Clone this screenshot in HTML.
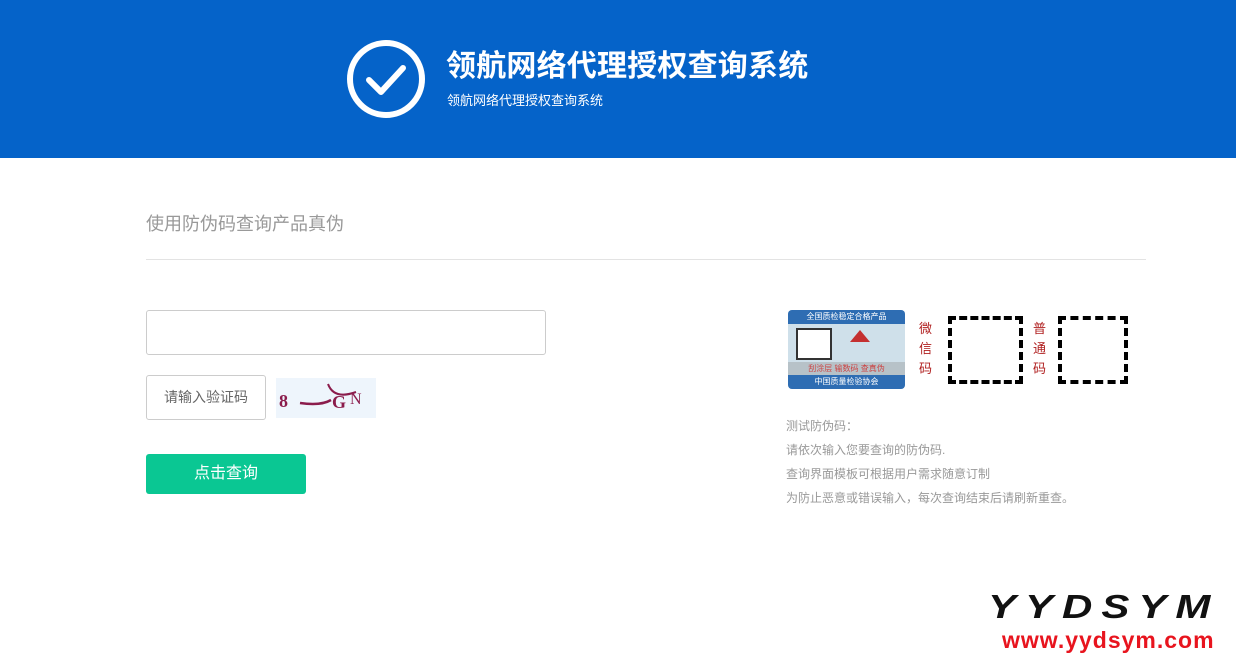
<!DOCTYPE html>
<html><head><meta charset="utf-8"><style>
*{margin:0;padding:0;box-sizing:border-box}
body{width:1236px;height:663px;position:relative;background:#fff;font-family:"Liberation Sans","Noto Sans CJK SC",sans-serif;overflow:hidden}
.a{position:absolute}
.hdr{left:0;top:0;width:1236px;height:158px;background:#0563c9}
.qr{border:4px dashed #000;background:#fff}
.g{font-size:12px;color:#999;left:786px}
</style></head><body>
<div class="a hdr"></div>
<svg class="a" style="left:345px;top:38px" width="82" height="82" viewBox="0 0 82 82"><circle cx="41" cy="41" r="36" fill="none" stroke="#fff" stroke-width="6"/><path d="M24 42 L36 54 L58 30" fill="none" stroke="#fff" stroke-width="6" stroke-linecap="round" stroke-linejoin="round"/></svg>
<div class="a" style="left:446px;top:41px;font-size:30px;font-weight:bold;color:#fff;letter-spacing:0.2px">领航网络代理授权查询系统</div>
<div class="a" style="left:447px;top:90px;font-size:13px;color:#fff">领航网络代理授权查询系统</div>
<div class="a" style="left:146px;top:210px;font-size:18px;color:#999">使用防伪码查询产品真伪</div>
<div class="a" style="left:146px;top:259px;width:1000px;height:1px;background:#e3e3e3"></div>
<div class="a" style="left:146px;top:310px;width:400px;height:45px;border:1px solid #ccc;border-radius:3px"></div>
<div class="a" style="left:146px;top:375px;width:120px;height:45px;border:1px solid #ccc;border-radius:3px;font-size:14px;color:#666;line-height:43px;text-align:center">请输入验证码</div>
<div class="a" style="left:276px;top:378px;width:100px;height:40px;background:#eef5fc"></div>
<svg class="a" style="left:276px;top:378px" width="100" height="40"><text x="3" y="29" font-family="Liberation Serif" font-weight="bold" font-size="18" fill="#8b1c4c">8</text><path d="M24 25 Q45 28 55 22" stroke="#8b1c4c" stroke-width="2.5" fill="none"/><path d="M52 6 Q58 22 80 14" stroke="#8b1c4c" stroke-width="2" fill="none"/><text x="56" y="30" font-family="Liberation Serif" font-weight="bold" font-size="18" fill="#8b1c4c">G</text><text x="74" y="26" font-family="Liberation Serif" font-size="16" fill="#8b1c4c">N</text></svg>
<div class="a" style="left:146px;top:454px;width:160px;height:40px;background:#0ac793;border-radius:3px;color:#fff;font-size:16px;line-height:40px;text-align:center">点击查询</div>
<div class="a" style="left:788px;top:310px;width:117px;height:79px;background:#cfe0ea;border-radius:4px;overflow:hidden">
<div style="height:14px;background:#2e6db3;color:#fff;font-size:8px;text-align:center;line-height:14px">全国质检稳定合格产品</div>
<div style="position:absolute;left:8px;top:18px;width:36px;height:32px;background:#fff;border:2px solid #333"></div>
<div style="position:absolute;left:62px;top:20px;width:0;height:0;border-left:10px solid transparent;border-right:10px solid transparent;border-bottom:12px solid #c43030"></div>
<div style="position:absolute;left:0;top:52px;width:117px;height:13px;background:#b7c2c8;color:#c44;font-size:8px;text-align:center;line-height:13px">刮涂层 输数码 查真伪</div>
<div style="position:absolute;left:0;top:65px;width:117px;height:14px;background:#2e6db3;color:#fff;font-size:8px;text-align:center;line-height:14px">中国质量检验协会</div>
</div>
<div class="a" style="left:919px;top:319px;width:14px;font-size:13px;color:#b02020;line-height:20px">微信码</div>
<div class="a qr" style="left:948px;top:316px;width:75px;height:68px"></div>
<div class="a" style="left:1033px;top:319px;width:14px;font-size:13px;color:#b02020;line-height:20px">普通码</div>
<div class="a qr" style="left:1058px;top:316px;width:70px;height:68px"></div>
<div class="a g" style="top:417px">测试防伪码：</div>
<div class="a g" style="top:441px">请依次输入您要查询的防伪码.</div>
<div class="a g" style="top:465px">查询界面模板可根据用户需求随意订制</div>
<div class="a g" style="top:489px">为防止恶意或错误输入，每次查询结束后请刷新重查。</div>
<div class="a" style="left:988px;top:590px;font-size:42px;font-weight:bold;font-style:italic;color:#111;letter-spacing:9px;line-height:42px;font-family:'Liberation Sans',sans-serif;transform:scaleY(0.8);transform-origin:top left">YYDSYM</div>
<div class="a" style="left:1002px;top:627px;font-size:23px;font-weight:bold;color:#e8141e;letter-spacing:1px">www.yydsym.com</div>
</body></html>
